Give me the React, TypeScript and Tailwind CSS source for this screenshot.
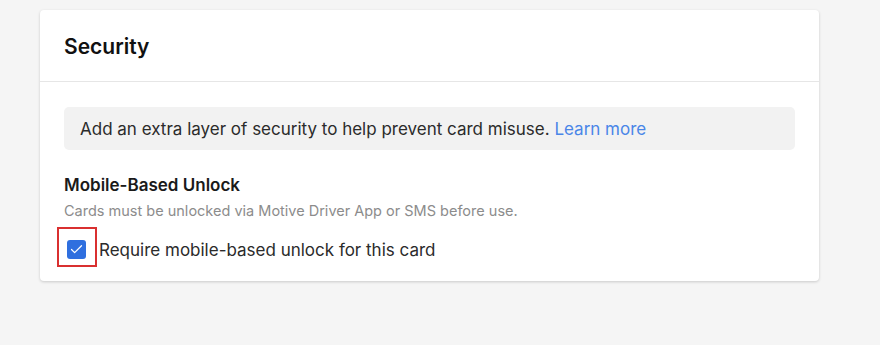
import { Check } from 'lucide-react';

export default function App() {
  return (
    <div className="min-h-[345px] w-[880px] bg-[#f5f5f5] pt-[10px] pl-[40px]" style={{ fontFamily: 'Inter, "Liberation Sans", sans-serif' }}>
      <div className="w-[779px] rounded-[4px] bg-white shadow-[0_1px_3px_rgba(0,0,0,0.18)]">
        <div className="flex h-[72px] items-center border-b border-[#e6e6e6] px-6">
          <h2 className="mt-[2px] text-[21px] font-semibold text-[#111]">Security</h2>
        </div>
        <div className="px-6 pt-[25px] pb-[14px]">
          <div className="flex h-[43px] items-center rounded-[5px] bg-[#f2f2f2] px-4 pt-[2px] text-[17px] text-[#2b2b2b]">
            Add an extra layer of security to help prevent card misuse.&nbsp;
            <a className="text-[#4a86e8]">Learn more</a>
          </div>
          <h3 className="mt-[23px] text-[17px] leading-6 font-semibold text-[#1a1a1a]">Mobile-Based Unlock</h3>
          <p className="mt-[4px] text-[14.5px] leading-5 text-[#8c8c8c]">Cards must be unlocked via Motive Driver App or SMS before use.</p>
          <div className="mt-[6px] flex h-[40px] items-center">
            <div className="relative flex h-[40px] w-[35px] items-center">
              <div className="absolute -left-[7px] top-0 h-[40px] w-[40px] border-2 border-[#d93030]" />
              <div className="ml-[3px] mt-[4px] flex h-[19px] w-[19px] items-center justify-center rounded-[3px] bg-[#2f6fdf]">
                <Check className="h-[15px] w-[15px] text-white" strokeWidth={2} />
              </div>
            </div>
            <span className="mt-[7px] text-[17px] text-[#2b2b2b]">Require mobile-based unlock for this card</span>
          </div>
        </div>
      </div>
    </div>
  );
}
